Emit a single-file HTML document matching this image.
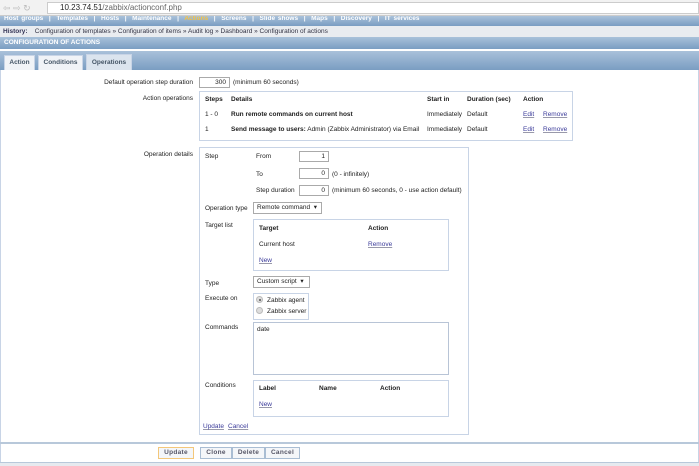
<!DOCTYPE html>
<html><head><meta charset="utf-8"><style>
*{margin:0;padding:0;box-sizing:border-box}
body{width:699px;height:466px;overflow:hidden;background:#fff;font-family:"Liberation Sans","DejaVu Sans",sans-serif;font-size:6.5px;color:#222;position:relative}
.a{position:absolute;white-space:nowrap}
.blue{background:linear-gradient(#a9c1da,#7a9dc2)}
.lnk{color:#3b3b9a;text-decoration:underline;text-decoration-color:#99a}
.inp{position:absolute;border:1px solid #aaa;background:#fff;text-align:right;padding-right:3px;height:11px;line-height:9px}
.box{position:absolute;border:1px solid #c8d4e6;background:#fff}
b{font-weight:bold}
.btn{position:absolute;top:447px;height:12px;border:1px solid #a9bdd3;background:#f4f6f9;color:#556;font-weight:bold;text-align:center;line-height:10px;letter-spacing:.3px}
</style></head><body>
<div class="a" style="left:0;top:0;width:699px;height:16px;background:#f2f2f2;border-bottom:1px solid #ccc"></div>
<div class="a" style="left:3px;top:3px;color:#bbb;font-size:9px">⇦ ⇨ ↻</div>
<div class="a" style="left:47px;top:2px;width:652px;height:12px;background:#fff;border:1px solid #ccc;font-size:8px;line-height:10px;padding-left:12px;color:#666"><span style="color:#222">10.23.74.51</span>/zabbix/actionconf.php</div>
<div class="a blue" style="left:0;top:16px;width:699px;height:10px;color:#fff;font-weight:bold;font-size:6.5px;line-height:5px;padding-left:4px;word-spacing:1px;overflow:hidden">Host groups &nbsp;|&nbsp; Templates &nbsp;|&nbsp; Hosts &nbsp;|&nbsp; Maintenance &nbsp;|&nbsp; <span style="color:#f5c242">Actions</span> &nbsp;|&nbsp; Screens &nbsp;|&nbsp; Slide shows &nbsp;|&nbsp; Maps &nbsp;|&nbsp; Discovery &nbsp;|&nbsp; IT services</div>
<div class="a" style="left:0;top:26px;width:699px;height:11px;background:#e9ecf0;line-height:11px;padding-left:3px;color:#334"><b style="color:#335">History:</b> &nbsp;&nbsp; Configuration of templates » Configuration of items » Audit log » Dashboard » Configuration of actions</div>
<div class="a blue" style="left:0;top:37px;width:699px;height:12px;color:#fff;font-weight:bold;line-height:12px;padding-left:4px">CONFIGURATION OF ACTIONS</div>
<div class="a blue" style="left:0;top:51px;width:699px;height:19px"></div>
<div class="a" style="left:4px;top:55px;width:31px;height:15px;background:#f0f3f7;border:1px solid #c8d4e6;border-bottom:0;text-align:center;line-height:13px;font-weight:bold;color:#456">Action</div>
<div class="a" style="left:38px;top:55px;width:45px;height:15px;background:#f0f3f7;border:1px solid #c8d4e6;border-bottom:0;text-align:center;line-height:13px;font-weight:bold;color:#456">Conditions</div>
<div class="a" style="left:86px;top:54px;width:46px;height:16px;background:#dbe4ee;border:1px solid #c8d4e6;border-bottom:0;text-align:center;line-height:15px;font-weight:bold;color:#456">Operations</div>
<div class="a" style="left:0;top:70px;width:699px;height:372px;border-left:1px solid #c8d4e6;border-right:1px solid #c8d4e6"></div>

<div class="a" style="right:506px;top:79px">Default operation step duration</div>
<div class="inp" style="left:199px;top:77px;width:31px">300</div>
<div class="a" style="left:233px;top:79px">(minimum 60 seconds)</div>

<div class="a" style="right:506px;top:95px">Action operations</div>
<div class="box" style="left:199px;top:91px;width:374px;height:50px"></div>
<div class="a" style="left:205px;top:96px"><b>Steps</b></div>
<div class="a" style="left:231px;top:96px"><b>Details</b></div>
<div class="a" style="left:427px;top:96px"><b>Start in</b></div>
<div class="a" style="left:467px;top:96px"><b>Duration (sec)</b></div>
<div class="a" style="left:523px;top:96px"><b>Action</b></div>
<div class="a" style="left:205px;top:111px">1 - 0</div>
<div class="a" style="left:231px;top:111px"><b>Run remote commands on current host</b></div>
<div class="a" style="left:427px;top:111px">Immediately</div>
<div class="a" style="left:467px;top:111px">Default</div>
<div class="a lnk" style="left:523px;top:111px">Edit</div>
<div class="a lnk" style="left:543px;top:111px">Remove</div>
<div class="a" style="left:205px;top:126px">1</div>
<div class="a" style="left:231px;top:126px"><b>Send message to users:</b> Admin (Zabbix Administrator) via Email</div>
<div class="a" style="left:427px;top:126px">Immediately</div>
<div class="a" style="left:467px;top:126px">Default</div>
<div class="a lnk" style="left:523px;top:126px">Edit</div>
<div class="a lnk" style="left:543px;top:126px">Remove</div>

<div class="a" style="right:506px;top:151px">Operation details</div>
<div class="box" style="left:199px;top:147px;width:270px;height:288px"></div>
<div class="a" style="left:205px;top:153px">Step</div>
<div class="a" style="left:256px;top:153px">From</div>
<div class="inp" style="left:299px;top:151px;width:30px">1</div>
<div class="a" style="left:256px;top:171px">To</div>
<div class="inp" style="left:299px;top:168px;width:30px">0</div>
<div class="a" style="left:332px;top:171px">(0 - infinitely)</div>
<div class="a" style="left:256px;top:187px">Step duration</div>
<div class="inp" style="left:299px;top:185px;width:30px">0</div>
<div class="a" style="left:332px;top:187px">(minimum 60 seconds, 0 - use action default)</div>
<div class="a" style="left:205px;top:205px">Operation type</div>
<div class="a" style="left:253px;top:202px;width:69px;height:12px;border:1px solid #aaa;line-height:10px;padding-left:3px">Remote command &nbsp;▾</div>
<div class="a" style="left:205px;top:222px">Target list</div>
<div class="box" style="left:253px;top:219px;width:196px;height:52px"></div>
<div class="a" style="left:259px;top:225px"><b>Target</b></div>
<div class="a" style="left:368px;top:225px"><b>Action</b></div>
<div class="a" style="left:259px;top:241px">Current host</div>
<div class="a lnk" style="left:368px;top:241px">Remove</div>
<div class="a lnk" style="left:259px;top:257px">New</div>
<div class="a" style="left:205px;top:280px">Type</div>
<div class="a" style="left:253px;top:276px;width:57px;height:12px;border:1px solid #aaa;line-height:10px;padding-left:3px">Custom script &nbsp;▾</div>
<div class="a" style="left:205px;top:295px">Execute on</div>
<div class="box" style="left:253px;top:293px;width:56px;height:27px"></div>
<div class="a" style="left:256px;top:296px;width:7px;height:7px;border-radius:50%;background:#ddd;border:1px solid #bbb"><div style="margin:1.5px;width:2px;height:2px;border-radius:50%;background:#555"></div></div>
<div class="a" style="left:267px;top:297px">Zabbix agent</div>
<div class="a" style="left:256px;top:307px;width:7px;height:7px;border-radius:50%;background:#ddd;border:1px solid #bbb"></div>
<div class="a" style="left:267px;top:308px">Zabbix server</div>
<div class="a" style="left:205px;top:324px">Commands</div>
<div class="box" style="left:253px;top:322px;width:196px;height:53px;border-color:#b8c4d6;padding:3px">date</div>
<div class="a" style="left:205px;top:382px">Conditions</div>
<div class="box" style="left:253px;top:380px;width:196px;height:37px"></div>
<div class="a" style="left:259px;top:385px"><b>Label</b></div>
<div class="a" style="left:319px;top:385px"><b>Name</b></div>
<div class="a" style="left:380px;top:385px"><b>Action</b></div>
<div class="a lnk" style="left:259px;top:401px">New</div>
<div class="a lnk" style="left:203px;top:423px">Update</div>
<div class="a lnk" style="left:228px;top:423px">Cancel</div>

<div class="a" style="left:0;top:442px;width:699px;height:2px;background:#b8c8da"></div>
<div class="a" style="left:0;top:444px;width:699px;height:18px;border-left:1px solid #c8d4e6;border-right:1px solid #c8d4e6"></div>
<div class="btn" style="left:158px;width:36px;border-color:#f3c77a">Update</div>
<div class="btn" style="left:200px;width:32px">Clone</div>
<div class="btn" style="left:232px;width:33px">Delete</div>
<div class="btn" style="left:265px;width:35px">Cancel</div>
<div class="a" style="left:0;top:462px;width:699px;height:4px;background:#e6eaef;border-top:1px solid #b8c8da"></div>
</body></html>
